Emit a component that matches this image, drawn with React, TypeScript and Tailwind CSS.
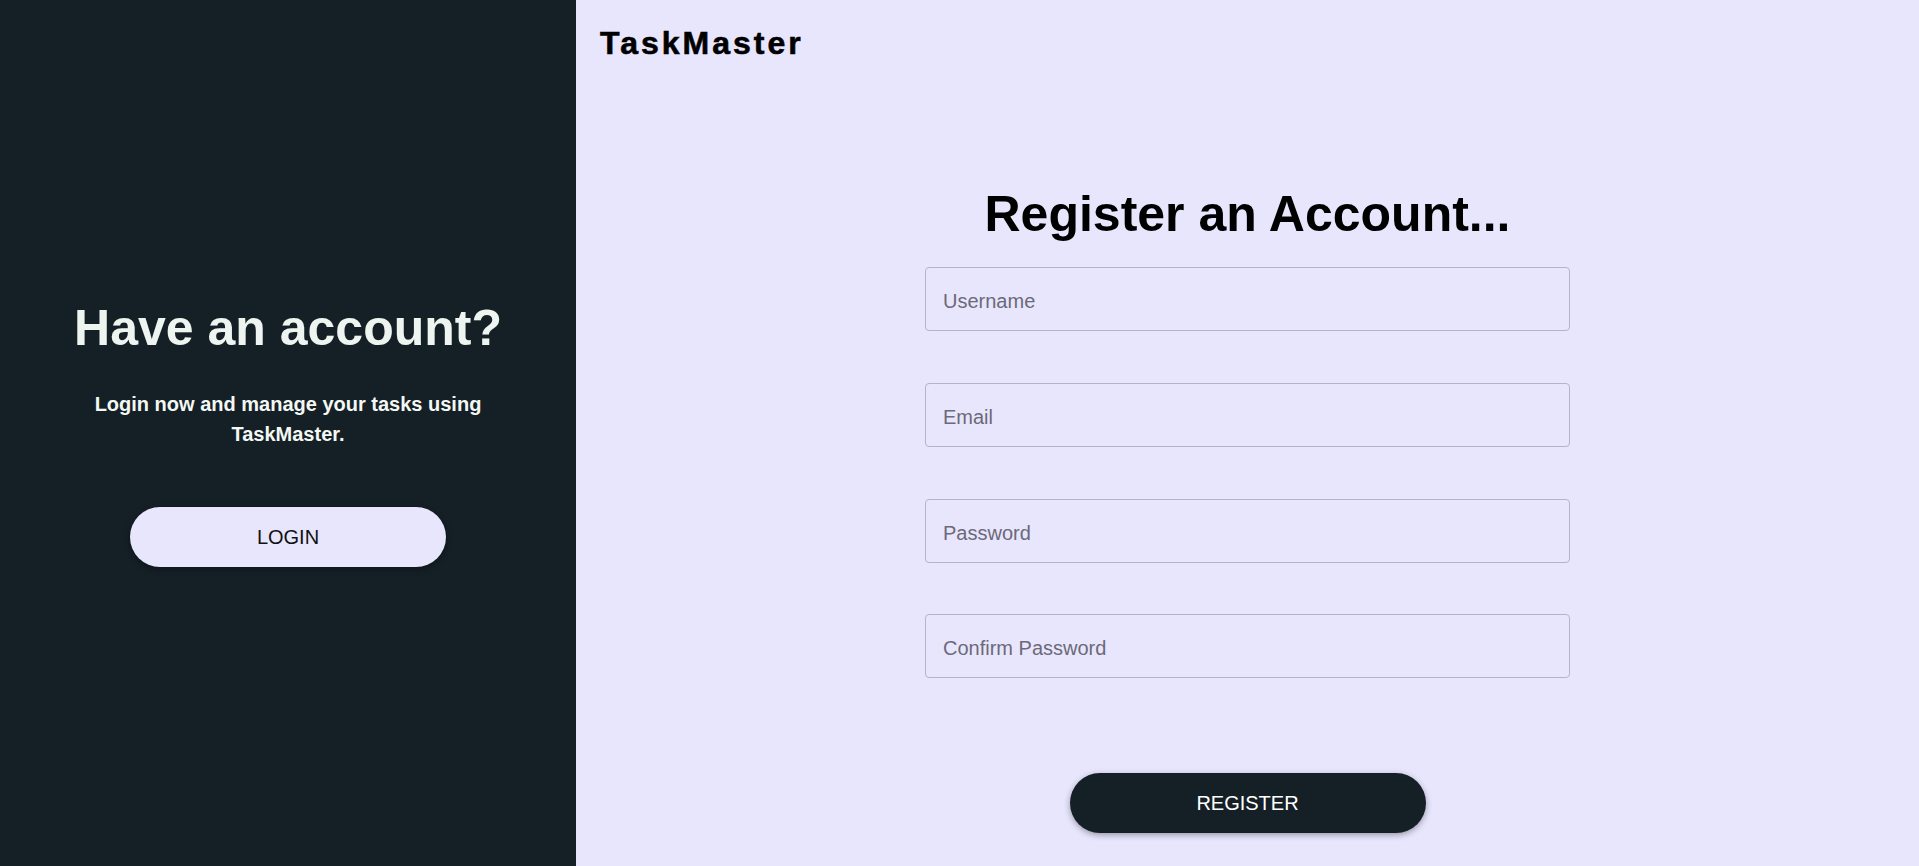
import React from "react";

const font = { fontFamily: '"Liberation Sans", Arial, sans-serif' };

function Field({ placeholder, type = "text" }: { placeholder: string; type?: string }) {
  return (
    <input
      type={type}
      placeholder={placeholder}
      className="w-[645px] h-[64px] rounded-[4px] border border-[#b6b3c8] bg-transparent pl-[17px] pt-[5px] text-[20px] text-black placeholder:text-[#6c6979] outline-none"
      style={font}
    />
  );
}

export default function App() {
  return (
    <div className="flex w-full h-[866px] overflow-hidden" style={font}>
      <div className="w-[576px] shrink-0 h-full bg-[#151f26] flex flex-col items-center justify-center">
        <h2 className="text-[50px] font-bold leading-[57.5px] text-[#eef5f0]">Have an account?</h2>
        <p className="mt-[31.5px] w-[430px] text-center text-[20px] leading-[30px] font-bold text-[#f3f8f4]">
          Login now and manage your tasks using TaskMaster.
        </p>
        <button className="mt-[58px] w-[316px] h-[60px] rounded-full bg-[#e8e6fd] text-[20px] text-[#111] shadow-[0_2px_6px_rgba(0,0,0,0.35)]">
          LOGIN
        </button>
      </div>
      <div className="flex-1 h-full bg-[#e8e6fd] flex flex-col">
        <div className="pl-[24px] pt-[25px]">
          <h1 className="text-[32px] font-bold leading-[36.8px] tracking-[3px] text-black [-webkit-text-stroke:0.6px_black]">TaskMaster</h1>
        </div>
        <div className="flex flex-col items-center mt-[124px]">
          <h2 className="text-[50px] font-bold leading-[57.5px] text-black">Register an Account...</h2>
          <div className="mt-[24px] flex flex-col gap-[51.7px]">
            <Field placeholder="Username" />
            <Field placeholder="Email" type="email" />
            <Field placeholder="Password" type="password" />
            <Field placeholder="Confirm Password" type="password" />
          </div>
          <button className="mt-[95px] w-[356px] h-[60px] rounded-full bg-[#151f26] text-[20px] text-white shadow-[0_2px_6px_rgba(0,0,0,0.35)]">
            REGISTER
          </button>
        </div>
      </div>
    </div>
  );
}
